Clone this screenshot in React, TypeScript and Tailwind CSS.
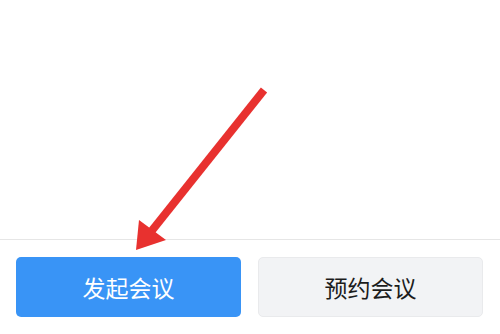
import React from 'react';

const App: React.FC = () => {
  return (
    <div className="relative w-[500px] h-[334px] bg-white flex flex-col font-['Noto_Sans_CJK_SC','Noto_Sans',sans-serif] overflow-hidden">
      <div className="h-[239px]"></div>
      <div className="border-t border-[#e6e6e6] flex gap-[17px] pl-4 pr-[17px] pt-[17px]">
        <button className="w-[225px] h-[60px] rounded-[5px] bg-[#3994f6] text-white text-[23px] flex items-center justify-center">
          发起会议
        </button>
        <button className="w-[225px] h-[60px] rounded-[5px] bg-[#f2f3f5] border border-[#e9eaec] text-[#1c1c1c] text-[23px] flex items-center justify-center">
          预约会议
        </button>
      </div>

      {/* red arrow annotation */}
      <svg className="absolute left-0 top-0" width="500" height="334" viewBox="0 0 500 334">
        <line x1="264" y1="90" x2="150" y2="233" stroke="#e8312f" strokeWidth="8" strokeLinecap="butt" />
        <polygon points="136,250 139,220 166,240" fill="#e8312f" />
      </svg>
    </div>
  );
};

export default App;
